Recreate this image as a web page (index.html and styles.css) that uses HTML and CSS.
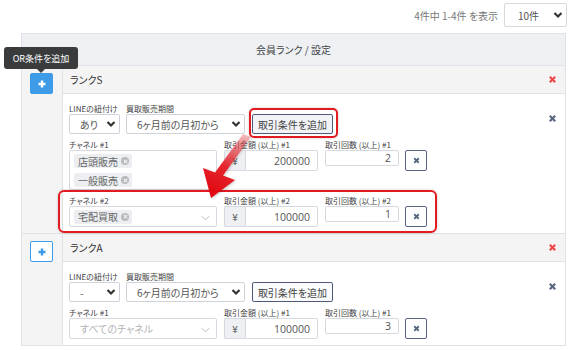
FILE: index.html
```html
<!DOCTYPE html>
<html lang="ja">
<head>
    <meta charset="UTF-8">
    <meta name="viewport" content="width=device-width, initial-scale=1.0">
    <title>会員ランク設定</title>
    <link rel="stylesheet" href="styles.css">
</head>
<body>
    <div class="page">
        <!-- 件数表示 -->
        <div class="toolbar">
            <span class="count">4件中 1-4件 を表示</span>
            <div class="select per-page">
                <span>10件</span>
                <svg class="chev" viewBox="0 0 10 8"><polyline points="1.5,2 5,5.5 8.5,2"/></svg>
            </div>
        </div>

        <div class="table">
            <div class="table-head">会員ランク / 設定</div>

            <!-- ランクS -->
            <div class="rank">
                <div class="rank-side">
                    <button class="btn-plus solid"><svg viewBox="0 0 10 10"><path d="M5 1.5v7M1.5 5h7"/></svg></button>
                    <div class="tooltip">OR条件を追加</div>
                </div>
                <div class="rank-main">
                    <div class="rank-title">
                        <span>ランクS</span>
                        <svg class="x red" viewBox="0 0 10 10"><path d="M2 2l6 6M8 2l-6 6"/></svg>
                    </div>
                    <div class="rank-body">
                        <div class="conds">
                            <div class="cond-row">
                                <div class="field w-line">
                                    <label>LINEの紐付け</label>
                                    <div class="select"><span>あり</span><svg class="chev" viewBox="0 0 10 8"><polyline points="1.5,2 5,5.5 8.5,2"/></svg></div>
                                </div>
                                <div class="field w-period">
                                    <label>買取販売期間</label>
                                    <div class="select"><span>6ヶ月前の月初から</span><svg class="chev" viewBox="0 0 10 8"><polyline points="1.5,2 5,5.5 8.5,2"/></svg></div>
                                </div>
                                <button class="btn-add marked">取引条件を追加</button>
                            </div>
                            <div class="cond-row">
                                <div class="field w-channel">
                                    <label>チャネル #1</label>
                                    <div class="multi tall">
                                        <span class="chip">店頭販売<i class="chip-x"></i></span>
                                        <span class="chip">一般販売<i class="chip-x"></i></span>
                                    </div>
                                </div>
                                <div class="field w-amount">
                                    <label>取引金額 (以上) #1</label>
                                    <div class="input-group"><span class="addon">¥</span><span class="input">200000</span></div>
                                </div>
                                <div class="field w-times">
                                    <label>取引回数 (以上) #1</label>
                                    <span class="input">2</span>
                                </div>
                                <button class="btn-x"><svg viewBox="0 0 10 10"><path d="M2.5 2.5l5 5M7.5 2.5l-5 5"/></svg></button>
                            </div>
                            <div class="cond-row marked-row">
                                <div class="field w-channel">
                                    <label>チャネル #2</label>
                                    <div class="multi">
                                        <span class="chip">宅配買取<i class="chip-x"></i></span>
                                        <svg class="chev-thin" viewBox="0 0 10 6"><polyline points="1,1 5,5 9,1"/></svg>
                                    </div>
                                </div>
                                <div class="field w-amount">
                                    <label>取引金額 (以上) #2</label>
                                    <div class="input-group"><span class="addon">¥</span><span class="input">100000</span></div>
                                </div>
                                <div class="field w-times">
                                    <label>取引回数 (以上) #2</label>
                                    <span class="input">1</span>
                                </div>
                                <button class="btn-x"><svg viewBox="0 0 10 10"><path d="M2.5 2.5l5 5M7.5 2.5l-5 5"/></svg></button>
                            </div>
                        </div>
                        <svg class="x dark" viewBox="0 0 10 10"><path d="M2 2l6 6M8 2l-6 6"/></svg>
                    </div>
                </div>
            </div>

            <!-- ランクA -->
            <div class="rank">
                <div class="rank-side">
                    <button class="btn-plus outline"><svg viewBox="0 0 10 10"><path d="M5 1.5v7M1.5 5h7"/></svg></button>
                </div>
                <div class="rank-main">
                    <div class="rank-title">
                        <span>ランクA</span>
                        <svg class="x red" viewBox="0 0 10 10"><path d="M2 2l6 6M8 2l-6 6"/></svg>
                    </div>
                    <div class="rank-body">
                        <div class="conds">
                            <div class="cond-row">
                                <div class="field w-line">
                                    <label>LINEの紐付け</label>
                                    <div class="select"><span>-</span><svg class="chev" viewBox="0 0 10 8"><polyline points="1.5,2 5,5.5 8.5,2"/></svg></div>
                                </div>
                                <div class="field w-period">
                                    <label>買取販売期間</label>
                                    <div class="select"><span>6ヶ月前の月初から</span><svg class="chev" viewBox="0 0 10 8"><polyline points="1.5,2 5,5.5 8.5,2"/></svg></div>
                                </div>
                                <button class="btn-add plain">取引条件を追加</button>
                            </div>
                            <div class="cond-row">
                                <div class="field w-channel">
                                    <label>チャネル #1</label>
                                    <div class="multi">
                                        <span class="placeholder">すべてのチャネル</span>
                                        <svg class="chev-thin" viewBox="0 0 10 6"><polyline points="1,1 5,5 9,1"/></svg>
                                    </div>
                                </div>
                                <div class="field w-amount">
                                    <label>取引金額 (以上) #1</label>
                                    <div class="input-group"><span class="addon">¥</span><span class="input">100000</span></div>
                                </div>
                                <div class="field w-times">
                                    <label>取引回数 (以上) #1</label>
                                    <span class="input">3</span>
                                </div>
                                <button class="btn-x"><svg viewBox="0 0 10 10"><path d="M2.5 2.5l5 5M7.5 2.5l-5 5"/></svg></button>
                            </div>
                        </div>
                        <svg class="x dark" viewBox="0 0 10 10"><path d="M2 2l6 6M8 2l-6 6"/></svg>
                    </div>
                </div>
            </div>
        </div>

        <!-- 説明用の矢印 -->
        <svg class="arrow" viewBox="0 0 569 350">
            <defs>
                <linearGradient id="arrowFill" x1="247" y1="133" x2="212" y2="196" gradientUnits="userSpaceOnUse">
                    <stop offset="0" stop-color="#f04a4f" stop-opacity="0.3"/>
                    <stop offset="0.55" stop-color="#e8141c" stop-opacity="0.9"/>
                    <stop offset="1" stop-color="#e0060e"/>
                </linearGradient>
            </defs>
            <polygon points="243,134 251,137 223,175.5 235,180 211,198 203,168 215,172.5" fill="url(#arrowFill)"/>
        </svg>
    </div>
</body>
</html>
```

FILE: styles.css
```css
* {
    box-sizing: border-box;
}

body {
    margin: 0;
    background: #fff;
    color: #555;
    font-family: "Noto Sans CJK JP", "Noto Sans", sans-serif;
    font-feature-settings: "palt";
}

.page {
    position: relative;
    width: 569px;
    height: 350px;
    overflow: hidden;
    padding: 3px 3px 0 21px;
}

/* 件数表示 */
.toolbar {
    display: flex;
    justify-content: flex-end;
    align-items: center;
    gap: 6px;
    height: 24px;
    margin-bottom: 6px;
    margin-right: -1px;
}

.count {
    font-size: 10px;
    color: #777;
}

.select {
    display: flex;
    align-items: center;
    justify-content: space-between;
    height: 20px;
    padding: 0 3px 0 10px;
    border: 1px solid #cfd3d9;
    border-radius: 2px;
    background: #fff;
    font-size: 10px;
    color: #555;
    white-space: nowrap;
}

.per-page {
    width: 63px;
    height: 24px;
    padding-left: 13px;
    border-color: #d6d9de;
}

.chev {
    width: 10px;
    height: 8px;
    flex: none;
}

.chev polyline {
    fill: none;
    stroke: #333;
    stroke-width: 2.2;
}

/* テーブル */
.table {
    border: 1px solid #dfe2e7;
}

.table-head {
    height: 32px;
    display: flex;
    align-items: center;
    justify-content: center;
    background: #eef0f3;
    border-bottom: 1px solid #dfe2e7;
    font-size: 10px;
    color: #444;
}

.rank {
    display: flex;
}

.rank + .rank {
    border-top: 1px solid #dfe2e7;
}

.rank-side {
    position: relative;
    width: 41px;
    flex: none;
    padding: 7px 0 0 8px;
    background: #f4f4f4;
    border-right: 1px solid #dfe2e7;
}

.btn-plus {
    display: flex;
    align-items: center;
    justify-content: center;
    width: 23px;
    height: 21px;
    padding: 0;
    border-radius: 2px;
    cursor: pointer;
}

.btn-plus svg {
    width: 10px;
    height: 10px;
}

.btn-plus path {
    stroke-width: 2.4;
}

.btn-plus.solid {
    background: #3d9be8;
    border: 1px solid #3d9be8;
}

.btn-plus.solid path {
    stroke: #fff;
}

.btn-plus.outline {
    background: #fff;
    border: 1px solid #3d9be8;
}

.btn-plus.outline path {
    stroke: #3d9be8;
}

.tooltip {
    position: absolute;
    left: -18px;
    top: -19px;
    width: 74px;
    height: 22px;
    display: flex;
    align-items: center;
    justify-content: center;
    background: #3a3b3c;
    border-radius: 3px;
    color: #fff;
    font-size: 9px;
    white-space: nowrap;
}

.tooltip::after {
    content: '';
    position: absolute;
    left: 50%;
    bottom: -4px;
    margin-left: -4px;
    border-left: 4px solid transparent;
    border-right: 4px solid transparent;
    border-top: 4px solid #3a3b3c;
}

.rank-main {
    flex: 1;
}

.rank-title {
    height: 28px;
    display: flex;
    align-items: center;
    justify-content: space-between;
    padding: 0 8px 0 7px;
    background: #f4f4f4;
    border-bottom: 1px solid #dfe2e7;
    font-size: 10px;
    color: #333;
}

.x {
    width: 9px;
    height: 9px;
}

.x path {
    stroke-width: 2.4;
}

.x.red path {
    stroke: #ef4747;
}

.x.dark path {
    stroke: #58667e;
}

.rank-body {
    display: flex;
    justify-content: space-between;
    align-items: flex-start;
    padding: 10px 8px 6px 6px;
}

.rank-body > .x {
    margin-top: 10px;
}

.conds {
    display: flex;
    flex-direction: column;
    gap: 6px;
}

.cond-row {
    display: flex;
    align-items: flex-start;
    gap: 7px;
}

.field {
    display: flex;
    flex-direction: column;
}

.field label {
    font-size: 8px;
    line-height: 10px;
    color: #444;
    white-space: nowrap;
}

.w-line { width: 51px; }
.w-period { width: 119px; margin-left: -1px; }
.w-channel { width: 148px; }
.w-amount { width: 94px; }
.w-times { width: 74px; }

.btn-add {
    height: 20px;
    width: 81px;
    margin-top: 10px;
    padding: 0;
    border: 1px solid #4d5b7b;
    border-radius: 2px;
    background: #f2f3f6;
    font-family: inherit;
    font-feature-settings: "palt";
    font-size: 10px;
    color: #444;
    cursor: pointer;
}

.btn-add.plain {
    background: #fafbfc;
}

.marked {
    position: relative;
}

.marked::after {
    content: '';
    position: absolute;
    inset: -7px -6px -5px -4px;
    border: 2px solid #e31a20;
    border-radius: 5px;
    box-shadow: 0 0 3px rgba(0, 0, 0, 0.2);
}

.marked-row {
    position: relative;
}

.marked-row::after {
    content: '';
    position: absolute;
    inset: -6px -10px -6px -11px;
    border: 2px solid #e31a20;
    border-radius: 6px;
    box-shadow: 0 0 3px rgba(0, 0, 0, 0.2);
    pointer-events: none;
}

.multi {
    position: relative;
    height: 21px;
    display: flex;
    align-items: center;
    padding: 0 4px;
    border: 1px solid #d6dae0;
    border-radius: 2px;
    background: #fff;
}

.multi.tall {
    height: 40px;
    flex-direction: column;
    align-items: flex-start;
    justify-content: flex-start;
    gap: 5px;
    padding-top: 3px;
}

.chip {
    display: inline-flex;
    align-items: center;
    gap: 3px;
    height: 14px;
    padding: 0 3px 0 4px;
    background: #eceef1;
    border-radius: 2px;
    font-size: 10px;
    color: #666;
}

.chip-x {
    position: relative;
    width: 8px;
    height: 8px;
    border-radius: 50%;
    background: #b8b9bb;
}

.chip-x::before,
.chip-x::after {
    content: '';
    position: absolute;
    left: 3.5px;
    top: 1.5px;
    width: 1px;
    height: 5px;
    background: #fff;
    transform: rotate(45deg);
}

.chip-x::after {
    transform: rotate(-45deg);
}

.chev-thin {
    position: absolute;
    right: 6px;
    top: 8px;
    width: 9px;
    height: 6px;
}

.chev-thin polyline {
    fill: none;
    stroke: #b3b6ba;
    stroke-width: 1;
}

.placeholder {
    font-size: 10px;
    color: #b0b3b7;
    padding-left: 6px;
}

.input-group {
    display: flex;
    height: 21px;
}

.addon {
    width: 21px;
    display: flex;
    align-items: center;
    justify-content: center;
    background: #eef0f3;
    border: 1px solid #d6dae0;
    border-right: none;
    border-radius: 2px 0 0 2px;
    font-size: 10px;
    color: #555;
}

.input {
    flex: 1;
    height: 21px;
    display: flex;
    align-items: center;
    justify-content: flex-end;
    padding-right: 7px;
    border: 1px solid #d6dae0;
    border-radius: 2px;
    background: #fff;
    font-family: "Open Sans", "Noto Sans", sans-serif;
    font-size: 10.5px;
    color: #555;
}

.input-group .input {
    border-radius: 0 2px 2px 0;
}

.btn-x {
    width: 22px;
    height: 21px;
    margin-top: 10px;
    margin-left: -1px;
    padding: 0;
    display: flex;
    align-items: center;
    justify-content: center;
    border: 1px solid #56647d;
    border-radius: 2px;
    background: #fff;
    cursor: pointer;
}

.btn-x svg {
    width: 9px;
    height: 9px;
}

.btn-x path {
    stroke: #56647d;
    stroke-width: 2;
}

/* 矢印 */
.arrow {
    position: absolute;
    left: 0;
    top: 0;
    width: 569px;
    height: 350px;
    pointer-events: none;
    filter: drop-shadow(1px 1px 1px rgba(0, 0, 0, 0.2));
}
```
